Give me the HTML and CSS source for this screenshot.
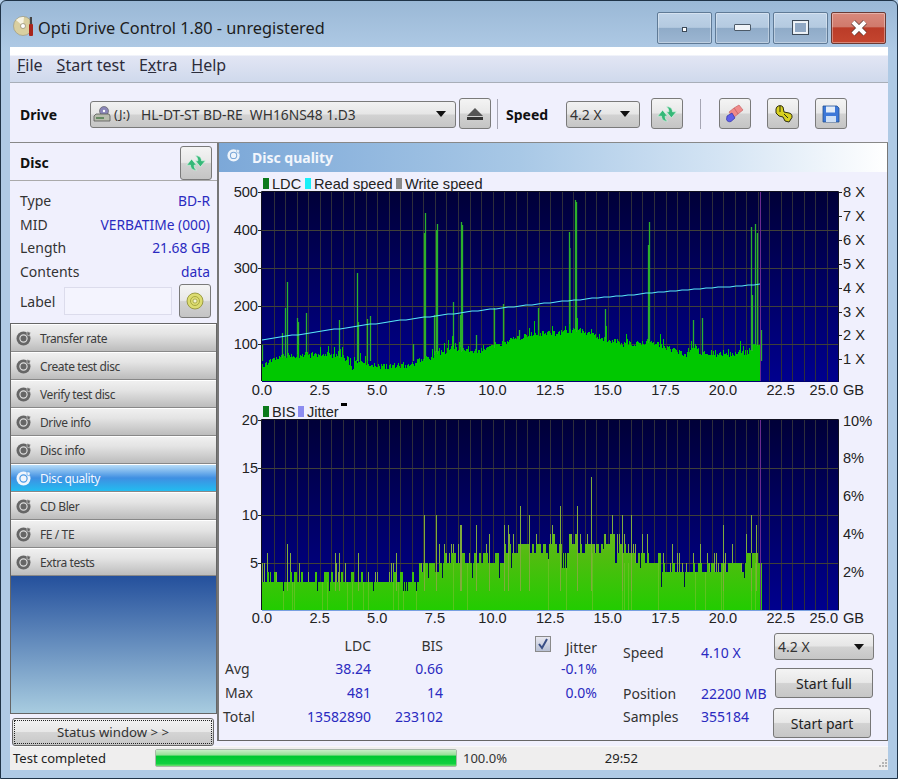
FILE: index.html
```html
<!DOCTYPE html>
<html lang="en">
<head>
    <meta charset="UTF-8">
    <meta name="viewport" content="width=device-width, initial-scale=1.0">
    <title>Opti Drive Control 1.80 - unregistered</title>
    <link rel="stylesheet" href="styles.css">
</head>
<body>
    <svg class="icon-defs" width="0" height="0" aria-hidden="true">
        <symbol id="i-disc" viewBox="0 0 16 16">
            <circle cx="7.5" cy="8.5" r="7" fill="currentColor"/>
            <circle cx="7.5" cy="8.5" r="3.6" fill="none" stroke="var(--ring, #ddd)" stroke-width="1.2"/>
            <circle cx="7.5" cy="8.5" r="1.3" fill="currentColor"/>
            <path d="M11 1.5l3.5 1-1 3.5-2.5-1z" fill="currentColor" stroke="var(--ring, #ddd)" stroke-width=".6"/>
        </symbol>
        <symbol id="i-refresh" viewBox="0 0 20 20">
            <path d="M1.500 12L6 6.500l4.500 5.500H8.300c0 2 .7 3.500 2.200 4.500-3 .3-5.500-1.500-5.500-4.500z" fill="#35b878" stroke="#d8f5e4" stroke-width=".6"/>
            <path d="M18.500 8L14 13.500 9.500 8h2.200c0-2-.7-3.500-2.200-4.500 3-.3 5.500 1.500 5.500 4.500z" fill="#35b878" stroke="#d8f5e4" stroke-width=".6"/>
        </symbol>
    </svg>

    <div class="window">
        <header class="titlebar">
            <svg class="app-icon" viewBox="0 0 22 22">
                <circle cx="10" cy="11" r="9.500" fill="#d9cfa0" stroke="#9a9270" stroke-width=".6"/>
                <path d="M10 11L3 5a9 9 0 0 1 8-3z" fill="#f6f3e2"/>
                <circle cx="10" cy="11" r="2.500" fill="#fff" stroke="#8a8266" stroke-width=".7"/>
                <rect x="16" y="9" width="4" height="12" rx="1" fill="#a8251c"/>
                <rect x="16.800" y="2" width="2.200" height="7" fill="#444"/>
            </svg>
            <h1>Opti Drive Control 1.80 - unregistered</h1>
            <div class="window-buttons">
                <span class="win-btn"><i class="glyph-dot"></i></span>
                <span class="win-btn"><i class="glyph-min"></i></span>
                <span class="win-btn"><i class="glyph-max"></i></span>
                <span class="win-btn close">
                    <svg viewBox="0 0 18 16" width="18" height="16"><path d="M3 2l12 12M15 2L3 14" stroke="#5c3a34" stroke-width="5.400"/><path d="M3 2l12 12M15 2L3 14" stroke="#fff" stroke-width="4"/></svg>
                </span>
            </div>
        </header>

        <div class="client">
            <nav class="menubar">
                <span><u>F</u>ile</span>
                <span><u>S</u>tart test</span>
                <span>E<u>x</u>tra</span>
                <span><u>H</u>elp</span>
            </nav>

            <div class="toolbar">
                <b class="tool-label drive-label">Drive</b>
                <div class="combo drive-combo">
                    <svg class="drive-icon" viewBox="0 0 18 18">
                        <circle cx="11" cy="6" r="4.500" fill="#8a86b8" stroke="#555" stroke-width=".6"/>
                        <circle cx="11" cy="6" r="1.200" fill="#fff"/>
                        <path d="M1 11l2-2h13l1 2v5H1z" fill="#b8bcae" stroke="#555" stroke-width=".8"/>
                        <path d="M3 13h8" stroke="#4a7a4a" stroke-width="1.400"/>
                    </svg>
                    <span class="drive-letter">(J:)</span>
                    <span class="drive-name">HL-DT-ST BD-RE  WH16NS48 1.D3</span>
                    <i class="arrow"></i>
                </div>
                <button class="tool-btn eject-btn">
                    <svg viewBox="0 0 18 16" width="18" height="16"><path d="M9 2l8 8H1z" fill="#555"/><rect x="1" y="11" width="16" height="3" fill="#333"/></svg>
                </button>
                <span class="tool-sep sep-speed"></span>
                <b class="tool-label speed-label">Speed</b>
                <div class="combo speed-combo"><span>4.2 X</span><i class="arrow"></i></div>
                <button class="tool-btn refresh-btn"><svg width="22" height="22"><use href="#i-refresh"/></svg></button>
                <span class="tool-sep sep-tools"></span>
                <button class="tool-btn">
                    <svg viewBox="0 0 20 20" width="20" height="20">
                        <path d="M9 4l5-3 4 5-5 4z" fill="#f08a8a" stroke="#c05a5a" stroke-width=".6"/>
                        <path d="M4 8l5-4 4 6-5 4z" fill="#f08a8a" stroke="#c05a5a" stroke-width=".6"/>
                        <path d="M2 12l5-3 3 5-4 3.500c-2 .8-4-.2-4.500-2z" fill="#5f5fe8" stroke="#3434a8" stroke-width=".7"/>
                    </svg>
                </button>
                <button class="tool-btn">
                    <svg viewBox="0 0 20 20" width="20" height="20">
                        <path d="M3 5a4 4 0 0 1 7-2l1 5 5 1a3.500 3.500 0 0 1 2 6l-2 3-4-1-2-4-4-1-3-3z" fill="#d8d020" stroke="#2e2e10" stroke-width="1"/>
                        <path d="M7 2v6M11 10l4 4" stroke="#2e2e10" stroke-width="1"/>
                    </svg>
                </button>
                <button class="tool-btn">
                    <svg viewBox="0 0 20 20" width="20" height="20">
                        <path d="M2 2h14l2 2v14H2z" fill="#3d78d8" stroke="#24508f" stroke-width=".8"/>
                        <rect x="5" y="2.500" width="9" height="6" fill="#e4edf8"/>
                        <rect x="5" y="12" width="10" height="6" fill="#cfe0f5"/>
                    </svg>
                </button>
            </div>

            <main class="workspace">
                <aside class="sidebar">
                    <div class="disc-head">
                        <h2>Disc</h2>
                        <button class="tool-btn side-btn"><svg width="22" height="22"><use href="#i-refresh"/></svg></button>
                    </div>
                    <dl class="disc-info">
                        <div><dt>Type</dt><dd>BD-R</dd></div>
                        <div><dt>MID</dt><dd>VERBATIMe (000)</dd></div>
                        <div><dt>Length</dt><dd>21.68 GB</dd></div>
                        <div><dt>Contents</dt><dd>data</dd></div>
                    </dl>
                    <div class="label-row">
                        <span>Label</span>
                        <div class="label-input"></div>
                        <button class="tool-btn label-btn">
                            <svg viewBox="0 0 20 20" width="20" height="20">
                                <circle cx="10" cy="10" r="8" fill="#dcdc70" stroke="#8a8a30" stroke-width=".8"/>
                                <circle cx="10" cy="10" r="4.500" fill="none" stroke="#a8a840" stroke-width="1"/>
                                <circle cx="10" cy="10" r="2" fill="#f4f4d0" stroke="#8a8a30" stroke-width=".6"/>
                            </svg>
                        </button>
                    </div>
                    <div class="side-nav">
                        <ul>
                            <li><svg><use href="#i-disc"/></svg>Transfer rate</li>
                            <li><svg><use href="#i-disc"/></svg>Create test disc</li>
                            <li><svg><use href="#i-disc"/></svg>Verify test disc</li>
                            <li><svg><use href="#i-disc"/></svg>Drive info</li>
                            <li><svg><use href="#i-disc"/></svg>Disc info</li>
                            <li class="active"><svg><use href="#i-disc"/></svg>Disc quality</li>
                            <li><svg><use href="#i-disc"/></svg>CD Bler</li>
                            <li><svg><use href="#i-disc"/></svg>FE / TE</li>
                            <li><svg><use href="#i-disc"/></svg>Extra tests</li>
                        </ul>
                        <div class="nav-fill"></div>
                    </div>
                    <button class="status-window">Status window &gt; &gt;</button>
                </aside>

                <section class="panel">
                    <div class="panel-head">
                        <svg width="14" height="14"><use href="#i-disc"/></svg>
                        <h2>Disc quality</h2>
                    </div>
                    <div id="chart-ldc" class="chart-ldc"></div>
                    <div id="chart-bis" class="chart-bis"></div>

                    <div class="stats">
                        <div class="stat-table">
                            <span></span><span class="head">LDC</span><span class="head">BIS</span>
                            <span>Avg</span><b>38.24</b><b>0.66</b>
                            <span>Max</span><b>481</b><b>14</b>
                            <span class="total">Total</span><b>13582890</b><b>233102</b>
                        </div>
                        <div class="jitter">
                            <div class="jitter-head">
                                <span class="check">
                                    <svg viewBox="0 0 14 14" width="14" height="14"><path d="M3 7l3 4 5-9" fill="none" stroke="#3a4f86" stroke-width="2"/></svg>
                                </span>
                                <span class="jitter-name">Jitter</span>
                            </div>
                            <b>-0.1%</b>
                            <b>0.0%</b>
                        </div>
                        <div class="run-info">
                            <div class="speed-row"><span>Speed</span><b>4.10 X</b></div>
                            <div><span>Position</span><b>22200 MB</b></div>
                            <div><span>Samples</span><b>355184</b></div>
                        </div>
                        <div class="actions">
                            <div class="combo action-combo"><span>4.2 X</span><i class="arrow"></i></div>
                            <button class="action-btn start-full">Start full</button>
                            <button class="action-btn start-part">Start part</button>
                        </div>
                    </div>
                </section>
            </main>

            <footer class="statusbar">
                <span class="status-text">Test completed</span>
                <div class="progress"><div class="progress-fill"></div></div>
                <span class="status-percent">100.0%</span>
                <span class="status-time">29:52</span>
                <svg class="grip" viewBox="0 0 12 12" width="12" height="12">
                    <path d="M9 2h2v2H9zM6 5h2v2H6zM9 5h2v2H9zM3 8h2v2H3zM6 8h2v2H6zM9 8h2v2H9z" fill="#b4b4b4"/>
                </svg>
            </footer>
        </div>
    </div>

    <script src="chart.js"></script>
</body>
</html>
```

FILE: styles.css
```css
* {
    box-sizing: border-box;
}
html, body {
    margin: 0;
    padding: 0;
}
body {
    font-family: 'Noto Sans', 'Open Sans', Arial, sans-serif;
    font-size: 14px;
    color: #333;
    background: #b6d0ea;
}
.icon-defs {
    display: block;
}
button {
    font-family: inherit;
    padding: 0;
}
.window {
    width: 898px;
    height: 779px;
    display: flex;
    flex-direction: column;
    border: 1px solid #1f3347;
    border-radius: 6px 6px 0 0;
    background: linear-gradient(#9ab8d6, #afcae5 50px);
    overflow: hidden;
}

/* title bar */
.titlebar {
    flex: 0 0 46px;
    display: flex;
    align-items: center;
    padding: 0 11px 0 12px;
}
.app-icon {
    width: 22px;
    height: 22px;
    margin-top: 4px;
}
.titlebar h1 {
    margin: 8px 0 0 3px;
    font-size: 16.300px;
    font-weight: 400;
    color: #1c1c1c;
}
.window-buttons {
    display: flex;
    gap: 3px;
    margin-left: auto;
    margin-top: 7px;
}
.win-btn {
    width: 55px;
    height: 32px;
    display: flex;
    align-items: center;
    justify-content: center;
    border: 1px solid #5f7a96;
    border-radius: 2px;
    background: linear-gradient(#bfd3e8, #b4cae0 48%, #8fabc8 50%, #9cb6d2);
    box-shadow: inset 0 0 0 1px rgba(255, 255, 255, 0.35);
}
.win-btn.close {
    border-color: #6a3a34;
    background: linear-gradient(#d9897c, #d07a6c 45%, #bb3c28 50%, #c4452f);
}
.glyph-dot {
    width: 5px;
    height: 5px;
    margin-top: 4px;
    border: 1px solid #3d4a58;
    background: #fff;
}
.glyph-min {
    width: 17px;
    height: 7px;
    border: 1px solid #4c5a68;
    border-radius: 1px;
    background: #f0f4f8;
}
.glyph-max {
    width: 17px;
    height: 15px;
    border: 1px solid #3d4a58;
    outline: 1px solid #e8eef4;
    outline-offset: -2px;
    background: #90a8c4;
    box-shadow: inset 0 0 0 2px #f0f4f8;
}

.client {
    flex: 1;
    margin: 0 9px 8px;
    display: flex;
    flex-direction: column;
    background: #f0f0fd;
}

/* menu */
.menubar {
    height: 36px;
    display: flex;
    gap: 14px;
    align-items: center;
    padding: 0 0 0 7px;
    font-size: 16px;
    color: #2c2c3a;
    border-bottom: 1px solid #a8aeb8;
    background: linear-gradient(#fff 8px, #e2e6f4 9px, #cfd9ec);
}

/* toolbar */
.toolbar {
    height: 60px;
    display: flex;
    align-items: center;
    border-bottom: 1px solid #888;
}
.tool-label {
    font-size: 14px;
    font-weight: 700;
    color: #111;
}
.drive-label {
    width: 80px;
    padding-left: 10px;
    margin-top: 4px;
}
.combo {
    display: flex;
    align-items: center;
    height: 27px;
    border: 1px solid #7a7a7a;
    border-radius: 3px;
    color: #333;
    background: linear-gradient(#f2f2f2, #e6e6e6 48%, #d2d2d2 52%, #c6c6c6);
}
.combo .arrow {
    margin-left: auto;
    margin-right: 9px;
    border-left: 5px solid transparent;
    border-right: 5px solid transparent;
    border-top: 6px solid #111;
}
.drive-combo {
    width: 366px;
    padding-left: 2px;
    margin-top: 3px;
    white-space: pre;
}
.drive-icon {
    width: 18px;
    height: 18px;
}
.drive-letter {
    margin-left: 3px;
    width: 27px;
    font-size: 13px;
}
.drive-name {
    font-size: 13.800px;
}
.tool-btn {
    width: 32px;
    height: 31px;
    display: flex;
    flex: none;
    align-items: center;
    justify-content: center;
    border: 1px solid #7a7a7a;
    border-radius: 3px;
    background: linear-gradient(#f4f4f4, #e8e8e8 48%, #d2d2d2 52%, #c4c4c4);
}
.toolbar .tool-btn {
    margin: 2px 16px 0 0;
}
.toolbar .eject-btn {
    margin-left: 3px;
    margin-right: 0;
}
.toolbar .refresh-btn {
    margin-right: 0;
}
.tool-sep {
    width: 1px;
    height: 30px;
    margin-top: 2px;
    background: #a6a6b4;
}
.sep-speed {
    margin-left: 6px;
}
.speed-label {
    width: 60px;
    margin-left: 8px;
    margin-top: 4px;
}
.speed-combo {
    width: 74px;
    padding-left: 3px;
    margin: 3px 11px 0 0;
}
.sep-tools {
    margin: 2px 18px 0 17px;
}

/* left side */
.workspace {
    flex: none;
    height: 603px;
    display: flex;
    align-items: flex-start;
}
.sidebar {
    width: 207px;
    height: 603px;
    display: flex;
    flex-direction: column;
}
.disc-head {
    height: 38px;
    display: flex;
    align-items: flex-start;
    justify-content: space-between;
    padding: 3px 5px 0 10px;
    border-bottom: 1px solid #aaa;
}
.disc-head h2 {
    margin: 7px 0 0;
    font-size: 14px;
    font-weight: 700;
    color: #111;
}
.side-btn {
    height: 34px;
}
.disc-info {
    margin: 8px 7px 0 10px;
}
.disc-info div {
    height: 23.500px;
    display: flex;
    align-items: center;
    justify-content: space-between;
}
.disc-info dt {
    color: #333;
}
.disc-info dd {
    margin: 0;
    font-size: 13.800px;
    color: #2a2ac0;
}
.label-row {
    height: 34px;
    display: flex;
    align-items: center;
    margin: 1px 5px 0 10px;
}
.label-row span {
    width: 44px;
}
.label-input {
    width: 108px;
    height: 28px;
    border: 1px solid #dcdcec;
    background: #f4f4fe;
}
.label-btn {
    height: 34px;
    margin-left: 7px;
}
.side-nav {
    flex: 1;
    display: flex;
    flex-direction: column;
    margin-top: 5px;
    border: 1px solid #666;
}
.side-nav ul {
    margin: 0;
    padding: 0;
    list-style: none;
}
.nav-fill {
    flex: 1;
    background: linear-gradient(#24509c, #a8cce0);
}
.side-nav li {
    height: 28px;
    display: flex;
    align-items: center;
    gap: 8px;
    padding-left: 5px;
    font-size: 12px;
    letter-spacing: -0.4px;
    color: #3c3c3c;
    border-top: 1px solid #fff;
    border-bottom: 1px solid #888;
    background: linear-gradient(#f0f0f0, #e4e4e4 35%, #bcbcbc);
}
.side-nav li svg {
    width: 16px;
    height: 16px;
    color: #666;
}
.side-nav li.active {
    --ring: #4a9ae6;
    color: #f4f8ff;
    background: linear-gradient(#b6dcf8, #3f8fe2 50%, #22bcf0);
}
.side-nav li.active svg {
    color: #f2f6fc;
}
.status-window {
    height: 28px;
    margin: 4px 3px 0 2px;
    flex: none;
    font-size: 13.200px;
    color: #333;
    border: 1px solid #666;
    border-radius: 3px;
    outline: 1px dotted #222;
    outline-offset: -3px;
    background: linear-gradient(#f2f2f2, #e8e8e8 48%, #d4d4d4 52%, #c8c8c8);
}

/* right side */
.panel {
    width: 671px;
    height: 598px;
    display: flex;
    flex-direction: column;
    border-left: 2px solid #777;
    border-right: 1px solid #777;
    border-bottom: 1px solid #666;
}
.panel-head {
    --ring: #7ca8d8;
    height: 29px;
    flex: none;
    display: flex;
    align-items: center;
    gap: 11px;
    padding-left: 8px;
    color: #eef4fb;
    background: linear-gradient(90deg, #7ca8d8, #a8c8e6 45%, #d4e4f4 75%, #fff);
}
.panel-head svg {
    margin-top: -6px;
}
.panel-head h2 {
    margin: 0;
    font-size: 14px;
    font-weight: 700;
    color: #f2f6fc;
}
.chart-ldc {
    height: 233px;
    flex: none;
}
.chart-bis {
    height: 225px;
    flex: none;
}
.chart-ldc svg, .chart-bis svg {
    display: block;
    overflow: visible;
}
.chart-text {
    font-family: 'Liberation Sans', Arial, sans-serif;
    font-size: 14.600px;
    fill: #222;
}

/* stats */
.stats {
    flex: 1;
    display: flex;
}
.stat-table {
    width: 225px;
    padding: 2px 0 0 6px;
    display: grid;
    grid-template-columns: 66px 80px 72px;
    grid-auto-rows: 24px;
    align-items: center;
}
.stat-table .head, .stat-table b {
    text-align: right;
}
.stat-table .head {
    margin-top: 3px;
}
.stat-table .total {
    margin-left: -2px;
}
b {
    font-weight: 400;
    color: #2a2ac0;
}
.jitter {
    width: 62px;
    margin-left: 91px;
    padding-top: 3px;
    display: flex;
    flex-direction: column;
    align-items: flex-end;
}
.jitter-head {
    width: 100%;
    display: flex;
    justify-content: space-between;
    align-items: center;
}
.jitter > *, .jitter-head {
    height: 24px;
    line-height: 24px;
}
.jitter-name {
    margin-top: 6px;
}
.check {
    width: 16px;
    height: 16px;
    display: flex;
    align-items: center;
    justify-content: center;
    margin-top: -3px;
    border: 1px solid #8a8a8a;
    background: linear-gradient(#e8e8f0, #b8c0d4);
}
.run-info {
    width: 152px;
    margin-left: 26px;
    padding-top: 11px;
}
.run-info div {
    height: 23.700px;
    display: grid;
    grid-template-columns: 78px 1fr;
    align-items: center;
}
.run-info .speed-row {
    margin-bottom: 16.500px;
}
.actions {
    flex: 1;
    display: flex;
    flex-direction: column;
    align-items: flex-start;
    padding-top: 3px;
}
.action-combo {
    width: 100px;
    padding-left: 3px;
    margin-left: -1px;
}
.action-btn {
    width: 98px;
    height: 30px;
    margin-top: 8px;
    font-size: 14px;
    color: #222;
    border: 1px solid #777;
    border-radius: 3px;
    background: linear-gradient(#f4f4f4, #e8e8e8 48%, #d2d2d2 52%, #c6c6c6);
}
.start-full {
    margin-left: 0;
}
.start-part {
    margin-left: -2px;
    margin-top: 10px;
}

/* status bar */
.statusbar {
    flex: 1;
    display: flex;
    align-items: center;
    font-size: 13px;
    background: #efeeee;
    border-top: 1px solid #f8f8f8;
}
.status-text {
    width: 145px;
    padding-left: 3px;
    margin-top: -2px;
    color: #222;
}
.progress {
    width: 302px;
    height: 18px;
    margin-top: -1px;
    border: 1px solid #a8b8a8;
    border-radius: 2px;
    background: #e8f4e8;
}
.progress-fill {
    height: 100%;
    background: linear-gradient(#c8eec8, #98e098 30%, #00c832 40%, #10d040 85%, #70e070);
}
.status-percent {
    width: 60px;
    margin: -2px 0 0 6px;
}
.status-time {
    width: 115px;
    margin-top: -2px;
    text-align: right;
    color: #222;
}
.grip {
    margin: 8px 0 0 auto;
}
```

FILE: chart.js
```js
const GB_PX = 23.05;
const PLOT_LEFT = 262;
const PLOT_RIGHT = 839;
const DATA_END = 761;

let seed = 4711;
function rand() {
    seed = (seed * 16807) % 2147483647;
    return seed / 2147483647;
}

// y of the LDC mass, read off the screenshot as [x, y]
const ldcEnvelope = [
    [262, 367], [268, 361], [287, 355], [320, 355], [347, 358], [352, 368], [357, 360], [363, 365],
    [387, 367], [407, 365], [427, 358], [453, 348], [477, 352], [503, 342], [537, 333], [560, 333],
    [577, 330], [593, 335], [610, 340], [627, 345], [648, 342], [660, 345], [687, 355], [695, 345],
    [700, 353], [727, 355], [747, 352], [760, 342], [761, 342]
];
const ldcSpikes = [
    [262, 345], [282, 333], [285, 308], [287, 282], [297, 318], [298, 322], [306, 313], [339, 320],
    [357, 273], [358, 322], [367, 319], [370, 316], [413, 344], [424, 233], [425, 213], [434, 315],
    [436, 230], [437, 224], [453, 302], [460, 315], [461, 222], [462, 225], [476, 335], [494, 308],
    [503, 304], [519, 330], [538, 308], [569, 232], [569.5, 248], [575, 200], [576, 202], [605, 309],
    [649, 222], [648, 245], [693, 320], [702, 318], [751, 227], [755, 224], [757, 233], [752, 295],
    [761, 330]
];
const bisLevels = [
    [262, 2], [265, 3], [418, 4], [440, 5], [467, 5], [513, 6], [613, 5], [660, 4], [743, 5]
];
const bisSpikes = [
    [287, 7], [335, 6], [339, 6], [358, 6], [396, 6], [424, 10], [436, 10], [460, 9], [461, 9], [476, 9],
    [489, 8], [504, 9], [508, 9], [520, 11], [529, 10], [560, 11], [577, 11], [591, 14], [622, 10], [631, 10],
    [723, 9], [751, 10], [756, 9]
];

function interpolate(points, x) {
    for (let i = 1; i < points.length; i++) {
        if (x <= points[i][0]) {
            const [x0, y0] = points[i - 1];
            const [x1, y1] = points[i];
            return y0 + (y1 - y0) * (x - x0) / (x1 - x0);
        }
    }
    return points[points.length - 1][1];
}

function stepLevel(x) {
    let level = bisLevels[0][1];
    bisLevels.forEach(([from, value]) => {
        if (x >= from) level = value;
    });
    return level;
}

function readSpeedPoints() {
    const points = [];
    for (let x = PLOT_LEFT; x <= DATA_END; x += 6) {
        const t = x - PLOT_LEFT;
        points.push(`${x},${Math.round(340 - 0.15358 * t + 0.0000841 * t * t)}`);
    }
    points.push(`${DATA_END},284`);
    return points.join(' ');
}

function plotFrame(id, top, bottom, hLines) {
    let lines = '';
    for (let x = PLOT_LEFT + 11.53; x < PLOT_RIGHT - 1; x += 11.53) {
        lines += `<path d="M${Math.round(x) + 0.5} ${top}V${bottom}" stroke="#2e2e3c"/>`;
    }
    hLines.forEach(y => {
        lines += `<path d="M${PLOT_LEFT} ${y + 0.5}H${PLOT_RIGHT}" stroke="#404038"/>`;
    });
    return `
        <linearGradient id="bg-${id}" x1="0" y1="0" x2="0" y2="1">
            <stop offset="0" stop-color="#000038"/>
            <stop offset="1" stop-color="#00008e"/>
        </linearGradient>
        <rect x="${PLOT_LEFT}" y="${top}" width="${PLOT_RIGHT - PLOT_LEFT}" height="${bottom - top}" fill="url(#bg-${id})"/>
        ${lines}`;
}

function plotBorder(top, bottom, bottomColor) {
    return `
        <path d="M${DATA_END - 0.5} ${top}V${bottom}" stroke="#6a2a90"/>
        <path d="M${PLOT_LEFT - 0.5} ${bottom}V${top - 0.5}H${PLOT_RIGHT - 0.5}V${bottom}" fill="none" stroke="#101020"/>
        <path d="M${PLOT_LEFT} ${bottom + 0.5}H${PLOT_RIGHT}" stroke="${bottomColor}"/>`;
}

function textAt(x, y, label, anchor = 'start') {
    return `<text class="chart-text" x="${x}" y="${y}" text-anchor="${anchor}">${label}</text>`;
}

function xAxis(baseline) {
    let out = '';
    for (let i = 0; i < 10; i++) {
        const value = (i * 2.5).toFixed(1);
        out += textAt(PLOT_LEFT + i * 2.5 * GB_PX, baseline, value, 'middle');
    }
    out += textAt(838, baseline, '25.0', 'end');
    out += textAt(843, baseline, 'GB');
    return out;
}

function yTicks(labels, side) {
    return labels.map(([y, label]) => {
        if (side === 'left') {
            return `<path d="M258 ${y + 0.5}H262" stroke="#222"/>` + textAt(258, y + 5, label, 'end');
        }
        return `<path d="M839 ${y + 0.5}H842" stroke="#222"/>` + textAt(843, y + 5, label);
    }).join('');
}

function legendBox(x, y, color) {
    return `<rect x="${x}" y="${y}" width="6" height="11" fill="${color}"/>`;
}

function renderLdc() {
    const top = 192;
    const bottom = 381;
    let mass = '';
    for (let x = PLOT_LEFT; x < DATA_END; x++) {
        let y = interpolate(ldcEnvelope, x) + (rand() - 0.5) * 6;
        if (rand() < 0.15) y -= rand() * 11;
        mass += `M${x + 0.5} ${bottom}V${y.toFixed(1)}`;
    }
    const spikes = ldcSpikes.map(([x, y]) => `M${x + 0.5} ${bottom - 20}V${y}`).join('');

    document.querySelector('#chart-ldc').innerHTML = `
        <svg width="669" height="233" viewBox="219 172 669 233">
            ${plotFrame('ldc', top, bottom, [230, 268, 306, 344])}
            <path d="${spikes}" stroke="#2cb02c" stroke-width="1.3" fill="none"/>
            <path d="${mass}" stroke="#00c800" fill="none" shape-rendering="crispEdges"/>
            <polyline points="${readSpeedPoints()}" fill="none" stroke="#58e8f8" stroke-width="1.1"/>
            ${plotBorder(top, bottom, '#000070')}
            ${legendBox(263, 178, '#0c7a1c')}${textAt(272, 189, 'LDC')}
            ${legendBox(305, 178, '#18f0f8')}${textAt(314, 189, 'Read speed')}
            ${legendBox(396, 178, '#8a8a8a')}${textAt(405, 189, 'Write speed')}
            ${yTicks([[192, '500'], [230, '400'], [268, '300'], [306, '200'], [344, '100']], 'left')}
            ${yTicks([[192, '8 X'], [216, '7 X'], [240, '6 X'], [264, '5 X'], [288, '4 X'], [312, '3 X'], [335, '2 X'], [359, '1 X']], 'right')}
            ${xAxis(395)}
        </svg>`;
}

function renderBis() {
    const top = 420;
    const bottom = 610;
    const unit = 9.5;
    let bars = '';
    let stripes = '';
    let thin = '';
    let dips = '';
    for (let x = PLOT_LEFT; x < DATA_END; x += 2.305) {
        const level = stepLevel(x);
        const left = Math.round(x);
        const width = Math.round(x + 2.305) - left;
        const ragged = x > 418 ? 0.6 : 0.35;
        const raised = level + (rand() < ragged ? 1 : 0) + (x > 500 && x < 640 && rand() < 0.35 ? 1 : 0);
        bars += `<rect x="${left}" y="${bottom - raised * unit}" width="${width}" height="${raised * unit}"/>`;
        const r = rand();
        if (r < 0.3) {
            const extra = raised + (rand() < 0.7 ? 1 : 2);
            thin += `M${left + 0.5} ${bottom - raised * unit}V${bottom - extra * unit}`;
        } else if (r < 0.42) {
            dips += `M${left + 0.5} ${bottom - raised * unit}v${unit * (x > 418 ? 1.6 : 1)}`;
        }
        if (rand() < 0.12) stripes += `M${left + 0.5} ${bottom - level * unit}V${bottom}`;
    }
    bisSpikes.forEach(([x, value]) => {
        thin += `M${x + 0.5} ${bottom - 2 * unit}V${bottom - value * unit}`;
    });

    document.querySelector('#chart-bis').innerHTML = `
        <svg width="669" height="225" viewBox="219 405 669 225">
            <linearGradient id="bis-fill" gradientUnits="userSpaceOnUse" x1="0" y1="510" x2="0" y2="610">
                <stop offset="0" stop-color="#7ab62c"/>
                <stop offset="0.45" stop-color="#52bc10"/>
                <stop offset="1" stop-color="#22cc00"/>
            </linearGradient>
            ${plotFrame('bis', top, bottom, [468, 515, 563])}
            <g fill="url(#bis-fill)" shape-rendering="crispEdges">${bars}</g>
            <path d="${stripes}" stroke="#7cc030" stroke-opacity=".6" fill="none" shape-rendering="crispEdges"/>
            <path d="${thin}" stroke="#80ac3c" fill="none" shape-rendering="crispEdges"/>
            <path d="${dips}" stroke="#00104a" fill="none" shape-rendering="crispEdges"/>
            ${plotBorder(top, bottom, '#78a0e0')}
            ${legendBox(263, 406, '#0c7a1c')}${textAt(272, 417, 'BIS')}
            ${legendBox(298, 406, '#8c8cf0')}${textAt(307, 417, 'Jitter')}
            <rect x="341" y="403" width="6" height="3" fill="#000"/>
            ${yTicks([[420, '20'], [468, '15'], [515, '10'], [563, '5']], 'left')}
            ${[[421, '10%'], [458, '8%'], [496, '6%'], [534, '4%'], [572, '2%']].map(([y, label]) => textAt(843, y + 5, label)).join('')}
            ${xAxis(623)}
        </svg>`;
}

renderLdc();
renderBis();
```
